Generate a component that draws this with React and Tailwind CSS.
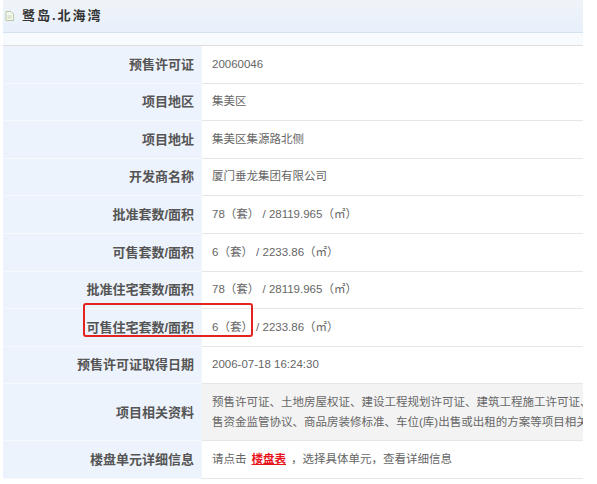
import React from 'react';

const ROWS = [
  { label: '预售许可证', value: '20060046' },
  { label: '项目地区', value: '集美区' },
  { label: '项目地址', value: '集美区集源路北侧' },
  { label: '开发商名称', value: '厦门垂龙集团有限公司' },
  { label: '批准套数/面积', value: '78（套） / 28119.965（㎡）' },
  { label: '可售套数/面积', value: '6（套） / 2233.86（㎡）' },
  { label: '批准住宅套数/面积', value: '78（套） / 28119.965（㎡）' },
  { label: '可售住宅套数/面积', value: '6（套） / 2233.86（㎡）' },
  { label: '预售许可证取得日期', value: '2006-07-18 16:24:30' },
];

const DocIcon = () => (
  <svg width="9" height="10" viewBox="0 0 9 10" fill="none">
    <path d="M1 0.5h5l2.5 2.5v6.5h-7.5z" fill="#f4f7ee" stroke="#b9c7a4" strokeWidth="1" />
    <path d="M2.5 5h4M2.5 7h4" stroke="#c9d4b5" strokeWidth="1" />
  </svg>
);

const Row = ({ label, children, tall, gray }) => (
  <div className={`flex ${tall ? 'h-[57px]' : 'h-[37.6px]'}`}>
    <div className="w-[198px] shrink-0 flex items-center justify-end pr-[7px] bg-[#edf3fc] border-b border-[#f7f9fd] text-[13px] font-bold text-[#555]">
      {label}
    </div>
    <div className={`flex-1 min-w-0 flex items-center pl-[10px] border-b border-l border-[#e6e6e6] border-l-[#f3f6fa] text-[11.5px] text-[#666] overflow-hidden whitespace-nowrap ${gray ? 'bg-[#f3f3f3]' : 'bg-white'}`}>
      {children}
    </div>
  </div>
);

export default function App() {
  return (
    <div className="w-[597px] h-[484px] bg-white overflow-hidden" style={{ fontFamily: '"Liberation Sans", "Noto Sans CJK SC", sans-serif' }}>
      <div className="w-[580px] ml-[3px]">
        <div className="h-[33px] flex items-center pl-[2px] gap-[8px] bg-gradient-to-b from-[#f0f4f9] to-[#e7effa] border-b border-[#d3e1f3]">
          <DocIcon />
          <span className="text-[13px] font-bold tracking-[2px] text-[#333]">鹭岛.北海湾</span>
        </div>
        <div className="h-[13px] bg-[#f8fbfe] border-b border-[#dedede]" />
        <div className="relative">
          {ROWS.map((r) => (
            <Row key={r.label} label={r.label}>{r.value}</Row>
          ))}
          <Row label="项目相关资料" tall gray>
            <div className="leading-[20px] w-full overflow-hidden">
              <div>预售许可证、土地房屋权证、建设工程规划许可证、建筑工程施工许可证、土</div>
              <div>售资金监管协议、商品房装修标准、车位(库)出售或出租的方案等项目相关材</div>
            </div>
          </Row>
          <Row label="楼盘单元详细信息">
            <span>请点击</span>
            <a className="mx-[5px] font-bold text-[#e8141b] underline">楼盘表</a>
            <span>，选择具体单元，查看详细信息</span>
          </Row>
          <div className="absolute left-[80px] top-[257px] w-[170px] h-[34px] border-2 border-[#e3231f] rounded-[3px] pointer-events-none" />
        </div>
      </div>
    </div>
  );
}
